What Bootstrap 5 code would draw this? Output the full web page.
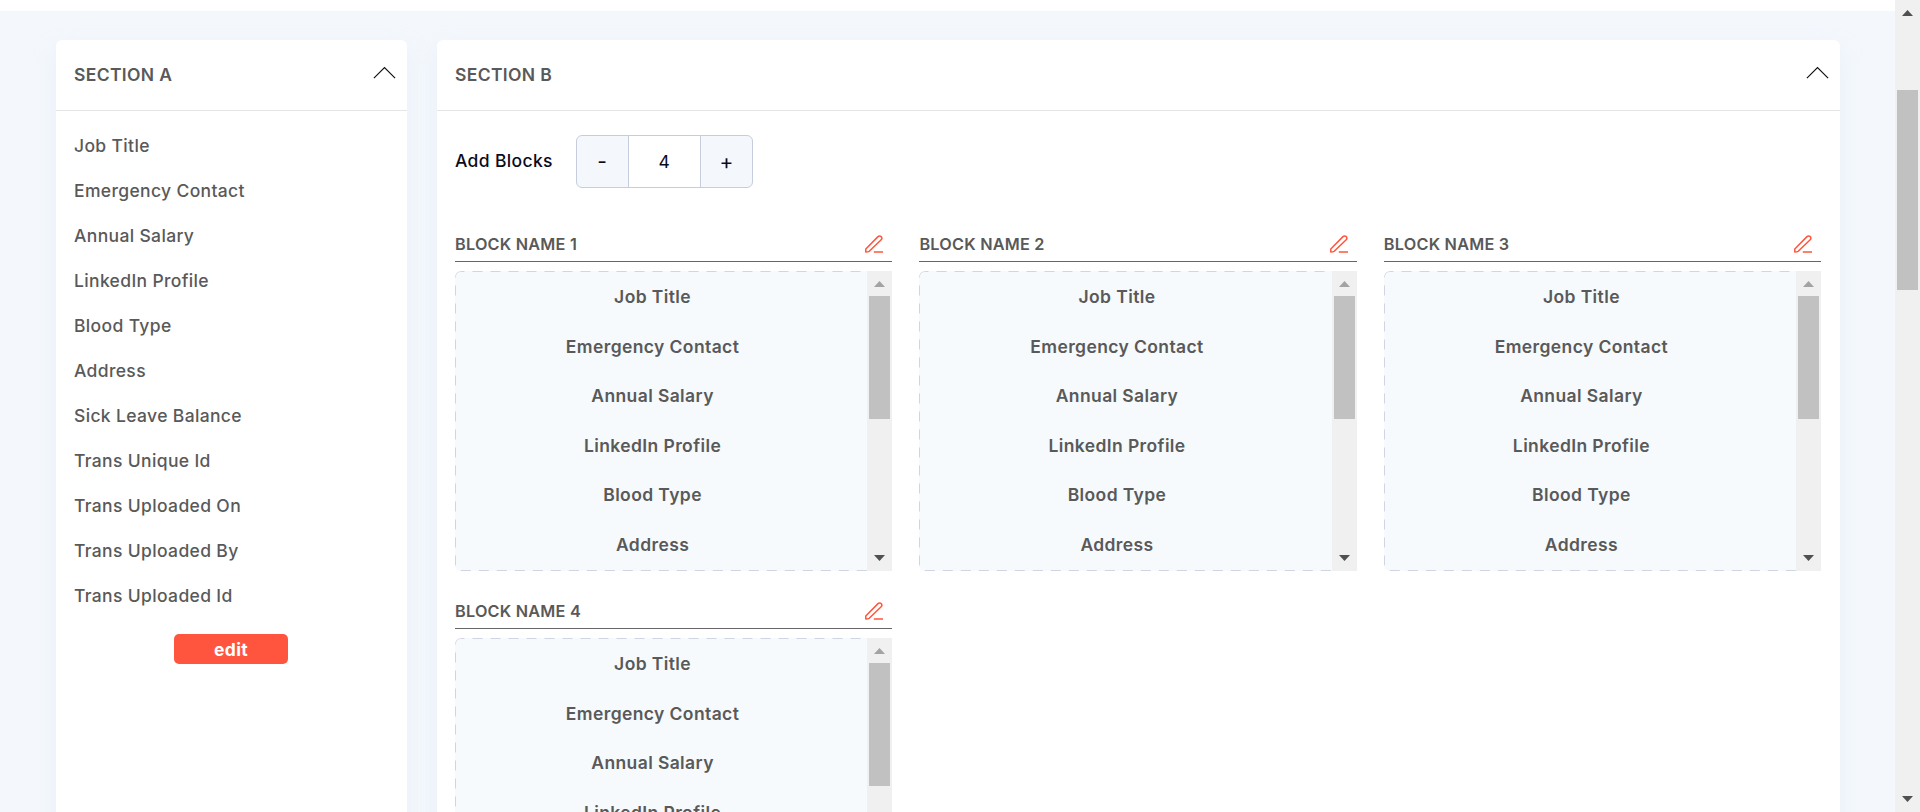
<!DOCTYPE html>
<html lang="en">
<head>
<meta charset="utf-8">
<title>Sections</title>
<meta name="viewport" content="width=device-width, initial-scale=1">
<link href="https://cdn.jsdelivr.net/npm/bootstrap@5.3.0/dist/css/bootstrap.min.css" rel="stylesheet">
<style>
  body { font-family: Inter, sans-serif; color: #595959; background: #fff; font-size: 17.5px; letter-spacing: .35px; }
  .viewport { height: 812px; }
  .page { border-top: 11px solid #fff; background: #f4f8fd; padding: 29px 55px 0 56px; gap: 30px; }
  .panel { background: #fff; border-radius: 6px 6px 0 0; box-shadow: 0 8px 22px rgba(205,216,230,.26); min-height: 900px; }
  .panel-a { width: 351px; flex: none; }
  .panel-head { height: 71px; border-bottom: 1px solid #e3e5e7; padding: 0 11px 0 18px; }
  .panel-head h2 { font-size: 17.5px; font-weight: 600; line-height: 1; }
  .panel-head svg { margin-top: -5px; }
  .field-list { padding: 12px 18px 0; font-weight: 500; }
  .field-list li { height: 45px; line-height: 45px; }
  .btn-edit { width: 114px; height: 30px; border-radius: 5px; background: #ff553e; color: #fff; font-weight: 700; font-size: 17.5px; line-height: 31px; letter-spacing: .4px; margin: 16px 0 0 118px; }
  .add-row { padding: 24px 0 0 18px; color: #0b0b1a; font-weight: 500; }
  .stepper { width: 177px; height: 53px; border: 1px solid #c6cddd; border-radius: 6px; margin-left: 23px; overflow: hidden; background: #f4f8fd; }
  .stepper > * { line-height: 51px; text-align: center; }
  .stepper .step { width: 51px; font-size: 21px; font-weight: 400; }
  .stepper .count { width: 74px; background: #fff; border: solid #c6cddd; border-width: 0 1px; font-weight: 400; }
  .blocks { display: grid; grid-template-columns: repeat(3, 1fr); column-gap: 27.3px; padding: 36px 19px 0 18px; }
  .block-item { height: 367px; }
  .block-head { height: 38px; border-bottom: 1px solid #666; padding: 3px 7px 0 0; letter-spacing: .22px; }
  .block-head h3 { font-size: 16.25px; font-weight: 600; line-height: 1; }
  .drop-zone { height: 300px; margin-top: 9px; background: #f6fafd; border-radius: 6px 0 0 6px; }
  .drop-zone ul { font-weight: 600; letter-spacing: .39px; padding: 1px 17px 0 0; }
  .drop-zone li { height: 49.5px; line-height: 49.5px; text-align: center; }
  .dashes rect { fill: none; stroke: #d0d5e2; stroke-dasharray: 10 8; stroke-dashoffset: 6; }
  .bar { width: 25px; background: #f0f0f0; padding: 10px 2px; flex: none; }
  .bar svg { display: block; flex: none; margin: 0 auto; }
  .thumb { background: #c1c1c1; width: 21px; flex: none; }
</style>
</head>
<body>
<div class="viewport d-flex overflow-hidden">
  <main class="page d-flex flex-grow-1">
    <section class="panel panel-a">
      <div class="panel-head d-flex align-items-center justify-content-between">
        <h2 class="m-0">SECTION A</h2>
        <svg width="23" height="13" fill="none" stroke="#111" stroke-width="1.2"><path d="M.9 12.200 11.500 1.600 22.100 12.200"/></svg>
      </div>
      <ul class="field-list list-unstyled m-0">
        <li>Job Title</li><li>Emergency Contact</li><li>Annual Salary</li><li>LinkedIn Profile</li><li>Blood Type</li><li>Address</li><li>Sick Leave Balance</li><li>Trans Unique Id</li><li>Trans Uploaded On</li><li>Trans Uploaded By</li><li>Trans Uploaded Id</li>
      </ul>
      <button class="btn btn-edit d-block p-0 border-0">edit</button>
    </section>
    <section class="panel flex-grow-1">
      <div class="panel-head d-flex align-items-center justify-content-between">
        <h2 class="m-0">SECTION B</h2>
        <svg width="23" height="13" fill="none" stroke="#111" stroke-width="1.2"><path d="M.9 12.200 11.500 1.600 22.100 12.200"/></svg>
      </div>
      <div class="add-row d-flex align-items-center">
        <span>Add Blocks</span>
        <div class="stepper d-flex">
          <span class="step">-</span><span class="count">4</span><span class="step">+</span>
        </div>
      </div>
      <div class="blocks" id="blocks"></div>
    </section>
  </main>
  <div class="bar d-flex flex-column">
    <svg width="11" height="6" fill="#505050"><path d="M5.5 0 11 6H0z"/></svg>
    <div class="thumb" style="height:200px;margin-top:74px"></div>
    <svg class="mt-auto" width="11" height="6" fill="#505050"><path d="M0 0h11L5.5 6z"/></svg>
  </div>
</div>
<template id="block-tpl">
  <div class="block-item">
    <div class="block-head d-flex align-items-center justify-content-between">
      <h3 class="m-0"></h3>
      <svg width="22" height="22" viewBox="0 0 22 22" fill="none" stroke="#ff553e" stroke-width="1.5" stroke-linejoin="round"><path d="M2.800 19v-3L15 3.600a2.200 2.200 0 0 1 3.200 0 2.200 2.200 0 0 1 0 3.200L6.200 18.300Q5 19 2.800 19zM10.800 19H20"/></svg>
    </div>
    <div class="drop-zone d-flex position-relative overflow-hidden">
      <svg class="dashes position-absolute top-0 start-0" width="437" height="300"><rect x=".5" y=".5" width="436" height="299" rx="5"/></svg>
      <ul class="list-unstyled m-0 flex-grow-1">
        <li>Job Title</li><li>Emergency Contact</li><li>Annual Salary</li><li>LinkedIn Profile</li><li>Blood Type</li><li>Address</li>
      </ul>
      <div class="bar d-flex flex-column position-relative">
        <svg width="11" height="6" fill="#a3a3a3"><path d="M5.500 0 11 6H0z"/></svg>
        <div class="thumb" style="height:123px;margin-top:9px"></div>
        <svg class="mt-auto" width="11" height="6" fill="#505050"><path d="M0 0h11L5.500 6z"/></svg>
      </div>
    </div>
  </div>
</template>
<script src="https://cdn.jsdelivr.net/npm/bootstrap@5.3.0/dist/js/bootstrap.bundle.min.js"></script>
<script>
  const tpl = document.getElementById('block-tpl');
  for (let i = 1; i <= 4; i++) {
    const node = tpl.content.cloneNode(true);
    node.querySelector('h3').textContent = 'BLOCK NAME ' + i;
    document.getElementById('blocks').append(node);
  }
</script>
</body>
</html>
